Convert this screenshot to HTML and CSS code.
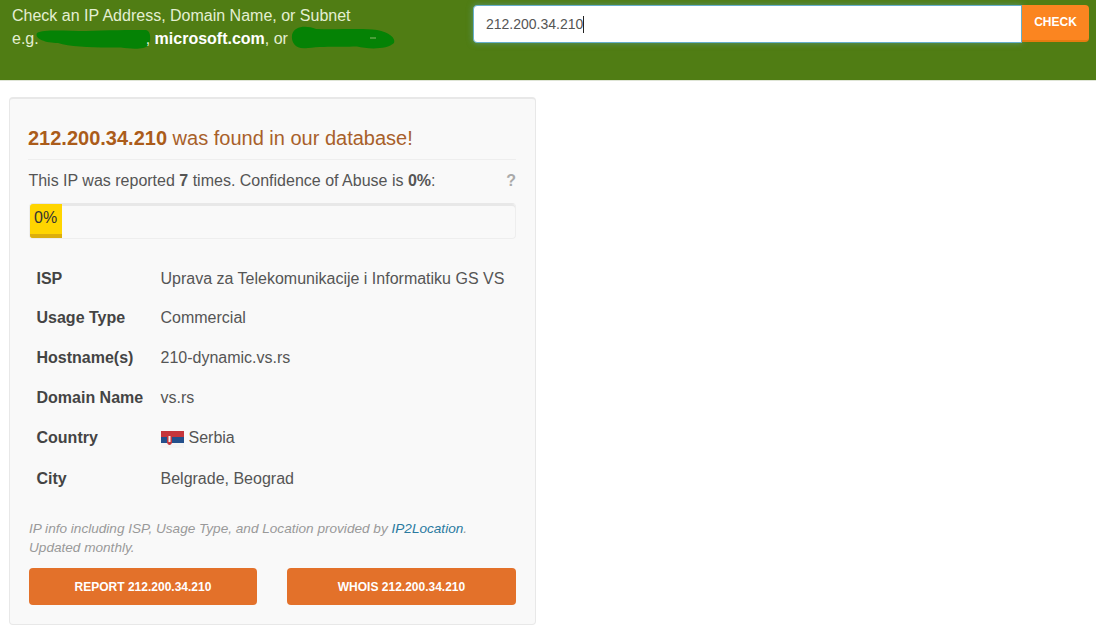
FILE: index.html
```html
<!DOCTYPE html>
<html lang="en">
<head>
<meta charset="utf-8">
<title>IP Check</title>
<link rel="stylesheet" href="styles.css">
</head>
<body>
<header class="topbar">
  <div class="hint">
    <div>Check an IP Address, Domain Name, or Subnet</div>
    <div class="hint-line">e.g.<svg class="blob blob-a" width="114" height="18" viewBox="0 0 114 18"><path d="M1 3 C8 -1 30 1 50 1 C70 0 95 0 110 0 C115 1 115 10 113 15 C108 20 95 19 85 17.500 C60 18 35 17 22 13 C10 13 -2 9 1 3 Z"/></svg>, <b>microsoft.com</b>, or <svg class="blob blob-b" width="102" height="21" viewBox="0 0 102 21"><path d="M0 8 C2 -1 14 -2 24 2 C45 3 70 1 85 3 C97 5 104 11 102 16 C95 23 75 22 65 19.500 C50 20 30 19 16 21 C4 23 -1 16 0 8 Z"/><path class="blob-mark" d="M78 11h6"/></svg></div>
  </div>
  <form class="search">
    <div class="search-input">212.200.34.210<span class="caret"></span></div>
    <button class="search-btn" type="button">CHECK</button>
  </form>
</header>

<main class="card">
  <h3 class="title"><b>212.200.34.210</b> was found in our database!</h3>
  <div class="report-line">
    <p>This IP was reported <b>7</b> times. Confidence of Abuse is <b>0%</b>:</p>
    <span class="help">?</span>
  </div>
  <div class="progress"><div class="progress-bar">0%</div></div>
  <table class="info">
    <tr class="row-first"><th>ISP</th><td>Uprava za Telekomunikacije i Informatiku GS VS</td></tr>
    <tr><th>Usage Type</th><td>Commercial</td></tr>
    <tr><th>Hostname(s)</th><td>210-dynamic.vs.rs</td></tr>
    <tr><th>Domain Name</th><td>vs.rs</td></tr>
    <tr class="row-flag"><th>Country</th><td><svg class="flag" width="23" height="17" viewBox="0 0 23 17"><rect width="23" height="6" fill="#c6363c"/><rect width="23" height="6" y="6" fill="#24508c"/><rect width="23" height="5" y="12" fill="#f4f4f4"/><path d="M6 3h5v8c0 2-1.500 3-2.500 3S6 13 6 11z" fill="#c6363c"/><path d="M7.500 5h2v6h-2z" fill="#eee"/></svg>Serbia</td></tr>
    <tr><th>City</th><td>Belgrade, Beograd</td></tr>
  </table>
  <p class="note">IP info including ISP, Usage Type, and Location provided by <a href="#">IP2Location</a>.<br>Updated monthly.</p>
  <div class="actions">
    <a class="action" href="#">REPORT 212.200.34.210</a>
    <a class="action" href="#">WHOIS 212.200.34.210</a>
  </div>
</main>
</body>
</html>
```

FILE: styles.css
```css
* { box-sizing: border-box; }
html, body { margin: 0; padding: 0; background: #fff; }
body {
  font-family: "Liberation Sans", Arial, sans-serif;
  font-size: 16px;
  color: #555;
  overflow: hidden;
}
.topbar {
  height: 81px;
  background: #507d14;
  border-bottom: 1px solid #dfe5d6;
  display: flex;
  justify-content: space-between;
  padding: 5px 7px 0 12px;
}
.hint { color: #e4efd2; line-height: 22px; width: 461px; }
.hint-line { white-space: nowrap; }
.hint b { color: #fff; }
.blob { fill: #058205; overflow: visible; vertical-align: -4px; }
.blob-a { margin: 0 -4px 0 -3px; }
.blob-b { margin-left: 0; }
.blob-mark { stroke: #8fb96f; stroke-width: 1; fill: none; }
.search { display: flex; width: 616px; height: 38px; }
.search-input {
  flex: 1;
  height: 38px;
  background: #fff;
  border: 1px solid #66afcc;
  border-radius: 4px 0 0 4px;
  box-shadow: 0 0 6px rgba(102, 175, 204, .5);
  padding: 0 12px;
  font-size: 14px;
  line-height: 36px;
  color: #555;
  display: flex;
  align-items: center;
}
.caret { width: 1px; height: 17px; background: #222; }
.search-btn {
  width: 67px;
  height: 37px;
  border: 0;
  border-bottom: 2px solid #e67b10;
  border-radius: 0 4px 4px 0;
  background: #fb8520;
  color: #fff;
  font: bold 12px "Liberation Sans", Arial, sans-serif;
  padding: 0 0 2px;
}
.card {
  width: 527px;
  height: 528px;
  margin: 16px 0 0 9px;
  background: #f9f9f9;
  border: 1px solid #e8e8e8;
  border-top-width: 2px;
  border-radius: 4px;
  padding: 0 19px;
}
.title {
  margin: 0 0 0 -1px;
  height: 61px;
  padding-top: 27px;
  font-size: 20px;
  line-height: 24px;
  font-weight: normal;
  color: #a8602a;
  border-bottom: 1px solid #eee;
}
.title b { color: #ab5c1a; }
.report-line {
  display: flex;
  justify-content: space-between;
  align-items: center;
  height: 42px;
  margin-left: -0.6px;
}
.report-line p { margin: 0; }
.help { font-weight: bold; color: #aaa; }
.progress {
  height: 36px;
  background: #f9f9f9;
  border: 1px solid #eee;
  border-top-color: #e8e8e8;
  border-radius: 4px;
  box-shadow: inset 0 2px 0 #e8e8e8;
  overflow: hidden;
  margin-top: 1px;
}
.progress-bar {
  width: 32px;
  height: 34px;
  background: #ffd500;
  border-bottom: 4px solid #dcae0c;
  color: #333;
  padding: 4px 0 0 4px;
  line-height: 20px;
}
.info { border-collapse: collapse; margin: 20px 0 0 -0.5px; width: 100%; }
.info th, .info td { padding: 0; height: 40px; line-height: 20px; vertical-align: middle; text-align: left; }
.info th { width: 132px; padding-left: 8px; color: #444; white-space: nowrap; }
.row-first th, .row-first td { height: 39px; }
.row-flag th, .row-flag td { height: 41px; padding-bottom: 2px; }
.flag { vertical-align: -5px; margin-right: 5px; }
.note {
  margin: 20px 0 0;
  font-size: 13.6px;
  line-height: 19px;
  font-style: italic;
  color: #999;
}
.note a { color: #2a7aa0; text-decoration: none; }
.actions { display: flex; justify-content: space-between; margin-top: 11px; }
.action {
  width: 228px;
  height: 37px;
  background: #e3712a;
  border-radius: 4px;
  color: #fff;
  font-size: 12px;
  font-weight: bold;
  text-decoration: none;
  text-align: center;
  line-height: 38px;
}
.action + .action { width: 229px; }
```
